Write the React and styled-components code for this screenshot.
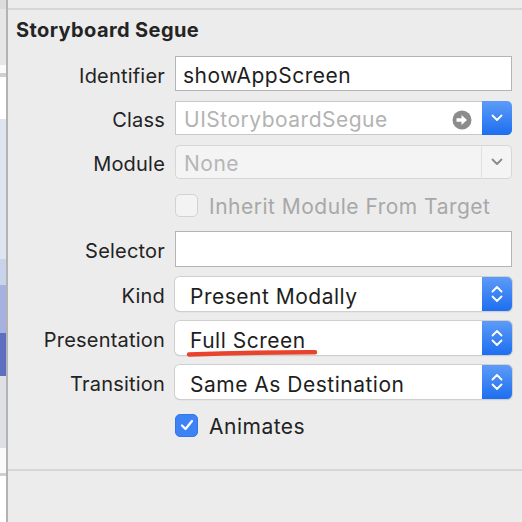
import React from 'react';
import styled, { createGlobalStyle } from 'styled-components';

const Global = createGlobalStyle`
  html, body { margin: 0; padding: 0; background: #ececec; }
  body { font-family: Inter, "Noto Sans", "Liberation Sans", sans-serif; }
`;

const Screen = styled.div`
  width: 522px;
  height: 522px;
  display: flex;
  flex-direction: row;
  overflow: hidden;
`;

const Strip = styled.div`
  width: 6px;
  display: flex;
  flex-direction: column;
`;

const StripPart = styled.div`
  height: ${p => p.h}px;
  background: ${p => p.c};
  flex: ${p => (p.grow ? 1 : 'none')};
`;

const Separator = styled.div`
  width: 2px;
  background: #b3b3b3;
`;

const Panel = styled.div`
  flex: 1;
  display: flex;
  flex-direction: column;
  background: #ececec;
`;

const Divider = styled.div`
  height: 2px;
  background: #d6d6d6;
  margin-top: ${p => p.top}px;
`;

const Title = styled.div`
  font-weight: 700;
  font-size: 20px;
  line-height: 22px;
  color: #242424;
  padding: 9px 0 0 8px;
  letter-spacing: 0.4px;
`;

const Form = styled.div`
  display: grid;
  grid-template-columns: 157px 337px;
  grid-template-rows: 35px 34px 34px 32px 36px 34px 34px 34px 32px;
  column-gap: 10px;
  row-gap: 10px;
  margin-top: 15px;
`;

const Label = styled.div`
  display: flex;
  align-items: center;
  justify-content: flex-end;
  padding-top: 4px;
  font-size: 20px;
  letter-spacing: 0.2px;
  color: #232323;
`;

const TextField = styled.div`
  box-sizing: border-box;
  border: 1px solid #b4b4b4;
  background: #fff;
  display: flex;
  align-items: center;
  padding: 4px 7px 0;
  font-size: 21px;
  letter-spacing: 0.5px;
  color: #1e1e1e;
`;

const Combo = styled.div`
  display: flex;
`;

const ComboField = styled.div`
  flex: 1;
  box-sizing: border-box;
  display: flex;
  align-items: center;
  justify-content: space-between;
  padding: 3px 10px 0 8px;
  font-size: 21px;
  letter-spacing: 0.5px;
  color: ${p => (p.disabled ? '#b6b6b6' : '#b3b3b3')};
  background: ${p => (p.disabled ? '#f4f4f4' : '#fff')};
  border: 1px solid ${p => (p.disabled ? '#d6d6d6' : '#c8c8c8')};
  border-right: ${p => (p.disabled ? '1px solid #e0e0e0' : 'none')};
  border-radius: ${p => (p.disabled ? '5px 0 0 5px' : '0')};
`;

const BlueButton = styled.div`
  width: 30px;
  flex: none;
  display: flex;
  flex-direction: column;
  align-items: center;
  justify-content: center;
  gap: 2px;
  background: linear-gradient(#5d9bf8, #1d6ef0);
  border-radius: 0 5px 5px 0;
`;

const GrayButton = styled.div`
  width: 29px;
  flex: none;
  display: flex;
  align-items: center;
  justify-content: center;
  background: #f4f4f4;
  border: 1px solid #d6d6d6;
  border-left: none;
  border-radius: 0 5px 5px 0;
`;

const Popup = styled.div`
  display: flex;
  border-radius: 5px;
  box-shadow: 0 0 0 1px #cfcfcf, 0 1px 1px rgba(0, 0, 0, 0.25);
  position: relative;
`;

const PopupText = styled.div`
  flex: 1;
  display: flex;
  align-items: center;
  padding: 4px 0 0 15px;
  font-size: 21px;
  letter-spacing: 0.5px;
  color: #1e1e1e;
  background: #fff;
  border-radius: 5px 0 0 5px;
`;

const CheckRow = styled.div`
  display: flex;
  align-items: center;
  gap: 11px;
  font-size: 21px;
  letter-spacing: 0.5px;
  color: ${p => (p.disabled ? '#a8a8a8' : '#222')};
`;

const CheckText = styled.span`
  padding-top: 3px;
`;

const Box = styled.div`
  width: 23px;
  height: 23px;
  box-sizing: border-box;
  border-radius: 5px;
  display: flex;
  align-items: center;
  justify-content: center;
  background: ${p => (p.checked ? '#3d83f5' : '#f3f3f3')};
  border: 1px solid ${p => (p.checked ? '#3477ea' : '#d2d2d2')};
`;

const Mark = styled.svg`
  position: absolute;
  left: 12px;
  bottom: -2px;
  overflow: visible;
`;

const Spacer = styled.div``;

const Chevron = ({ dir = 'down', color = '#fff' }) => (
  <svg width="12" height="8" viewBox="0 0 12 8">
    <path
      d={dir === 'down' ? 'M1.5 1.5 L6 6 L10.5 1.5' : 'M1.5 6.5 L6 2 L10.5 6.5'}
      fill="none"
      stroke={color}
      strokeWidth="1.8"
      strokeLinecap="round"
      strokeLinejoin="round"
    />
  </svg>
);

const ArrowCircle = () => (
  <svg width="20" height="20" viewBox="0 0 20 20">
    <circle cx="10" cy="10" r="9.5" fill="#8c8c8c" />
    <path d="M4.5 8.2 H9.5 V5 L15 10 L9.5 15 V11.8 H4.5 Z" fill="#fff" />
  </svg>
);

const Stepper = () => (
  <BlueButton>
    <Chevron dir="up" />
    <Chevron dir="down" />
  </BlueButton>
);

const strip = [
  { h: 9, c: '#dcdcdc' },
  { h: 56, c: '#e6e6e6' },
  { h: 8, c: '#fbfbfb' },
  { h: 4, c: '#cfcfcf' },
  { h: 42, c: '#ffffff' },
  { h: 140, c: '#dfe5f0' },
  { h: 26, c: '#c9d3ea' },
  { h: 48, c: '#a5b1de' },
  { h: 43, c: '#5e6fc2' },
  { h: 72, c: '#dfe0e6' },
  { h: 25, c: '#fafafa' },
  { h: 3, c: '#cfcfcf' },
];

const App = () => (
  <>
    <Global />
    <Screen>
      <Strip>
        {strip.map((s, i) => (
          <StripPart key={i} h={s.h} c={s.c} />
        ))}
        <StripPart grow c="#ffffff" />
      </Strip>
      <Separator />
      <Panel>
        <Divider top={8} />
        <Title>Storyboard Segue</Title>
        <Form>
          <Label>Identifier</Label>
          <TextField>showAppScreen</TextField>

          <Label>Class</Label>
          <Combo>
            <ComboField>
              UIStoryboardSegue
              <ArrowCircle />
            </ComboField>
            <BlueButton>
              <Chevron />
            </BlueButton>
          </Combo>

          <Label>Module</Label>
          <Combo>
            <ComboField disabled>None</ComboField>
            <GrayButton>
              <Chevron color="#8a8a8a" />
            </GrayButton>
          </Combo>

          <Spacer />
          <CheckRow disabled>
            <Box />
            <CheckText>Inherit Module From Target</CheckText>
          </CheckRow>

          <Label>Selector</Label>
          <TextField />

          <Label>Kind</Label>
          <Popup>
            <PopupText>Present Modally</PopupText>
            <Stepper />
          </Popup>

          <Label>Presentation</Label>
          <Popup>
            <PopupText>Full Screen</PopupText>
            <Stepper />
            <Mark width="130" height="8" viewBox="0 0 130 8">
              <path d="M2 5.5 Q60 3.2 128 3.3" fill="none" stroke="#e8432c" strokeWidth="4.5" strokeLinecap="round" />
            </Mark>
          </Popup>

          <Label>Transition</Label>
          <Popup>
            <PopupText>Same As Destination</PopupText>
            <Stepper />
          </Popup>

          <Spacer />
          <CheckRow>
            <Box checked>
              <svg width="14" height="12" viewBox="0 0 14 12">
                <path d="M2 6.5 L5.5 10 L12 2" fill="none" stroke="#fff" strokeWidth="2.2" strokeLinecap="round" strokeLinejoin="round" />
              </svg>
            </Box>
            <CheckText>Animates</CheckText>
          </CheckRow>
        </Form>
        <Divider top={28} />
      </Panel>
    </Screen>
  </>
);

export default App;
